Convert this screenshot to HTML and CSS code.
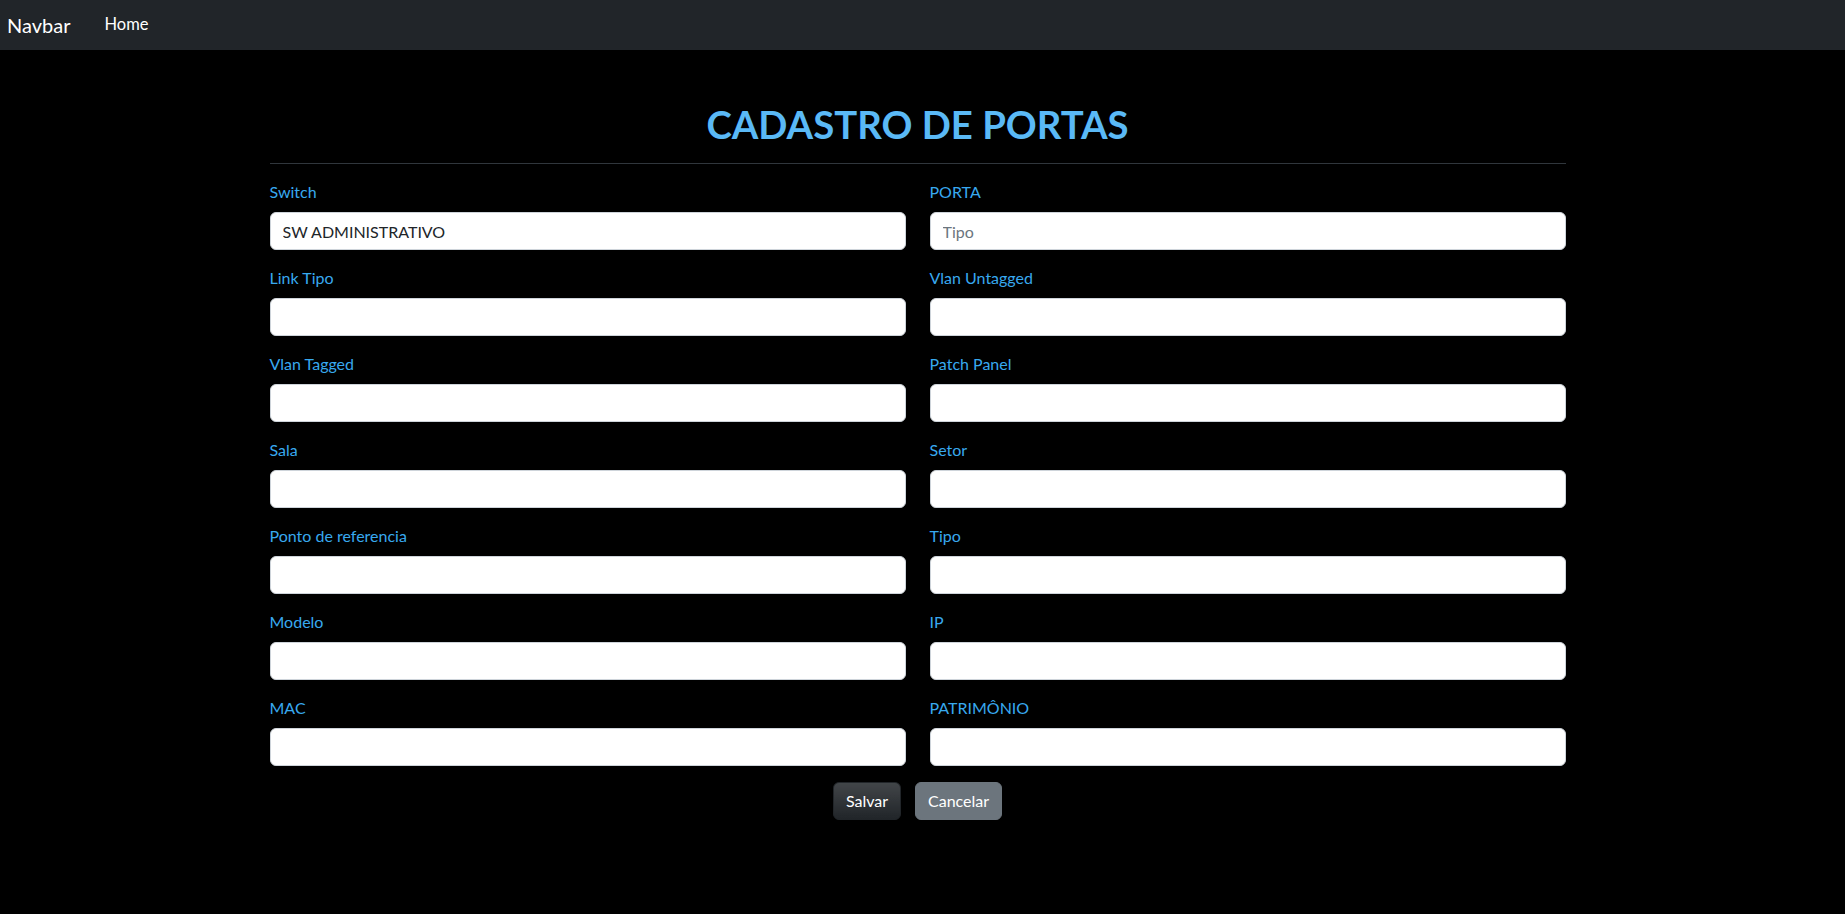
FILE: index.html
```html
<!DOCTYPE html>
<html lang="pt-BR">
<head>
<meta charset="utf-8">
<title>Cadastro de Portas</title>
<link rel="stylesheet" href="styles.css">
</head>
<body>
<nav class="navbar">
  <a class="brand" href="#">Navbar</a>
  <a class="nav-link" href="#">Home</a>
</nav>
<main class="container">
  <h1 class="title">CADASTRO DE PORTAS</h1>
  <hr class="divider">
  <form class="form-grid">
    <div class="field"><label class="label">Switch</label><input class="input" type="text" value="SW ADMINISTRATIVO"></div>
    <div class="field"><label class="label">PORTA</label><input class="input" type="text" placeholder="Tipo"></div>
    <div class="field"><label class="label">Link Tipo</label><input class="input" type="text"></div>
    <div class="field"><label class="label">Vlan Untagged</label><input class="input" type="text"></div>
    <div class="field"><label class="label">Vlan Tagged</label><input class="input" type="text"></div>
    <div class="field"><label class="label">Patch Panel</label><input class="input" type="text"></div>
    <div class="field"><label class="label">Sala</label><input class="input" type="text"></div>
    <div class="field"><label class="label">Setor</label><input class="input" type="text"></div>
    <div class="field"><label class="label">Ponto de referencia</label><input class="input" type="text"></div>
    <div class="field"><label class="label">Tipo</label><input class="input" type="text"></div>
    <div class="field"><label class="label">Modelo</label><input class="input" type="text"></div>
    <div class="field"><label class="label">IP</label><input class="input" type="text"></div>
    <div class="field"><label class="label">MAC</label><input class="input" type="text"></div>
    <div class="field"><label class="label">PATRIMÔNIO</label><input class="input" type="text"></div>
    <div class="actions">
      <button class="btn btn-dark" type="button">Salvar</button>
      <button class="btn btn-secondary" type="button">Cancelar</button>
    </div>
  </form>
</main>
</body>
</html>
```
FILE: styles.css
```css
* { box-sizing: border-box; }
html, body { margin: 0; padding: 0; }
body {
  background: #000;
  color: #fff;
  font-family: Lato, "Liberation Sans", sans-serif;
  font-size: 16px;
  line-height: 24px;
  min-height: 914px;
}
.navbar {
  height: 50px;
  background: #212529;
  display: flex;
  align-items: center;
  padding: 0 7px;
}
.brand {
  color: #fff;
  font-size: 20px;
  text-decoration: none;
  line-height: 30px;
  margin-right: 34px;
}
.nav-link {
  color: #fff;
  text-decoration: none;
  font-size: 16.5px;
  line-height: 24px;
  margin-top: -2px;
}
.container {
  width: 1296px;
  margin-left: calc((100% - 1296px) / 2 - 5px);
  padding-top: 50px;
}
.title {
  margin: 0;
  text-align: center;
  font-size: 38.3px;
  line-height: 48px;
  font-weight: 700;
  color: #5ab9f6;
}
.divider {
  margin: 15px 0 16px;
  border: 0;
  border-top: 1px solid #30363c;
  height: 0;
}
.form-grid {
  display: grid;
  grid-template-columns: 1fr 1fr;
  column-gap: 24px;
  margin: 0;
}
.field {
  display: flex;
  flex-direction: column;
  margin-bottom: 16px;
}
.label {
  color: #38a9ef;
  font-size: 16px;
  line-height: 24px;
  margin-bottom: 8px;
}
.input {
  height: 38px;
  border: 1px solid #ced4da;
  border-radius: 6px;
  background: #fff;
  padding: 6px 12px;
  font-family: Lato, "Liberation Sans", sans-serif;
  font-size: 16px;
  line-height: 24px;
  color: #212529;
}
.input::placeholder { color: #6c757d; }
.actions {
  grid-column: 1 / -1;
  display: flex;
  justify-content: center;
  gap: 14px;
}
.btn {
  height: 38px;
  padding: 6px 12px;
  border: 1px solid transparent;
  border-radius: 6px;
  font-family: Lato, "Liberation Sans", sans-serif;
  font-size: 16px;
  line-height: 24px;
  color: #fff;
}
.btn-dark {
  background-color: #212529;
  background-image: linear-gradient(180deg, rgba(255,255,255,.15), rgba(255,255,255,0));
  border-color: #212529;
}
.btn-secondary {
  background-color: #6c757d;
  border-color: #6c757d;
}
```
